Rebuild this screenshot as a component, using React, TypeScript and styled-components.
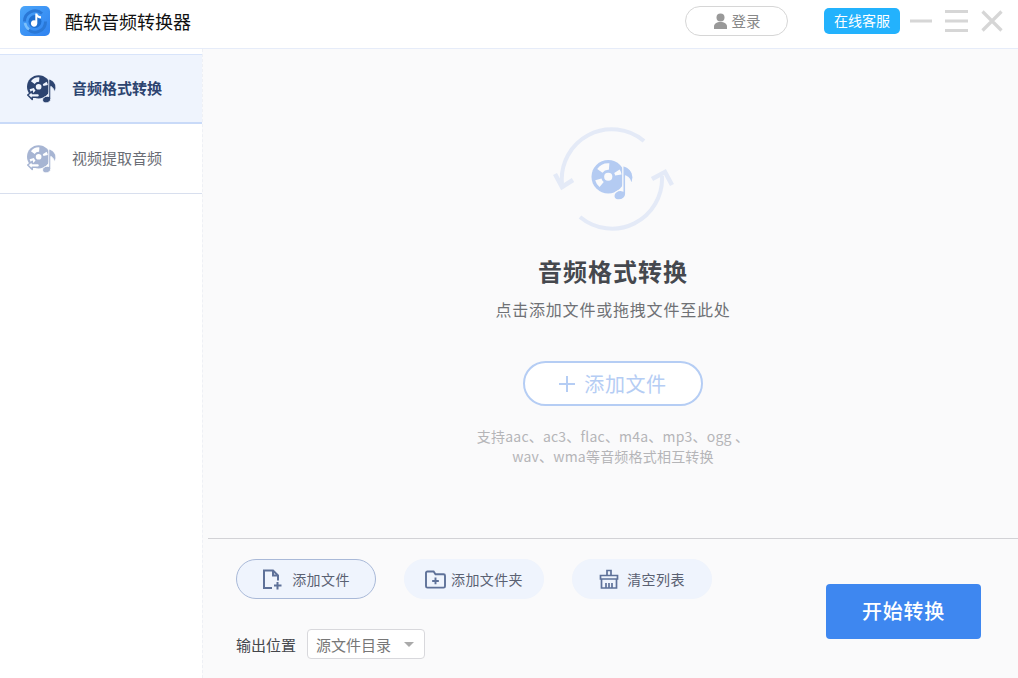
import React from "react";
import styled, { createGlobalStyle } from "styled-components";

const GlobalStyle = createGlobalStyle`
  html, body {
    margin: 0;
    padding: 0;
    background: #fff;
  }
  body {
    font-family: "Noto Sans CJK SC", "Liberation Sans", sans-serif;
  }
  * {
    box-sizing: border-box;
  }
`;

const Window = styled.div`
  width: 1018px;
  height: 678px;
  display: flex;
  flex-direction: column;
  overflow: hidden;
`;

const TitleBar = styled.div`
  height: 49px;
  flex: none;
  display: flex;
  align-items: center;
  padding: 0 15px 6px 20px;
  border-bottom: 1px solid #e6ecf9;
`;

const AppName = styled.div`
  margin-left: 15px;
  font-size: 18px;
  color: #111;
  flex: 1;
`;

const LoginButton = styled.div`
  width: 103px;
  height: 30px;
  border: 1px solid #d6d6d6;
  border-radius: 15px;
  display: flex;
  align-items: center;
  justify-content: center;
  gap: 4px;
  font-size: 14.5px;
  line-height: 26px;
  color: #888;
  margin-right: 36px;
`;

const ServiceButton = styled.div`
  width: 76px;
  height: 26px;
  border-radius: 5px;
  background: #23b2fd;
  color: #fff;
  font-size: 14px;
  line-height: 24px;
  padding-bottom: 2px;
  display: flex;
  align-items: center;
  justify-content: center;
  margin-right: 10px;
`;

const WindowIcons = styled.div`
  display: flex;
  align-items: center;
  gap: 13px;
`;

const Body = styled.div`
  flex: 1;
  display: flex;
  min-height: 0;
`;

const Sidebar = styled.div`
  width: 202px;
  flex: none;
  padding-top: 5px;
`;

const NavItem = styled.div<{ $active?: boolean }>`
  height: 70px;
  display: flex;
  align-items: center;
  padding-left: 27px;
  gap: 15px;
  font-size: 15px;
  font-weight: ${({ $active }) => ($active ? 700 : 400)};
  color: ${({ $active }) => ($active ? "#2d4470" : "#6a6d75")};
  background: ${({ $active }) => ($active ? "#eff4fd" : "#fff")};
  border-bottom: ${({ $active }) => ($active ? "2px solid #c9daf8" : "1px solid #d8dfee")};
  border-top: ${({ $active }) => ($active ? "1px solid #d8e4fa" : "none")};
`;

const NavLabel = styled.span`
  margin-top: -3px;
`;

const Main = styled.div`
  flex: 1;
  display: flex;
  flex-direction: column;
  background: #fafafb;
  padding-left: 5px;
  border-left: 1px dashed #eef0f5;
`;

const DropArea = styled.div`
  height: 490px;
  flex: none;
  display: flex;
  flex-direction: column;
  align-items: center;
  padding-top: 78px;
  border-bottom: 1px solid #d2d2d6;
`;

const DropTitle = styled.div`
  margin-top: 24px;
  font-size: 24px;
  line-height: 32px;
  letter-spacing: 1px;
  font-weight: 700;
  color: #45484e;
`;

const DropHint = styled.div`
  margin-top: 10px;
  font-size: 16px;
  line-height: 24px;
  letter-spacing: 0.8px;
  color: #6f7175;
`;

const AddButton = styled.div`
  margin-top: 40px;
  width: 180px;
  height: 45px;
  border: 2px solid #b5cdf4;
  border-radius: 23px;
  background: #fff;
  color: #b5cdf4;
  font-size: 20px;
  letter-spacing: 0.6px;
  display: flex;
  align-items: center;
  justify-content: center;
  gap: 9px;
`;

const Formats = styled.div`
  margin-top: 20px;
  font-size: 14px;
  line-height: 20px;
  letter-spacing: 0.2px;
  color: #b5b5b8;
  text-align: center;
`;

const Footer = styled.div`
  flex: 1;
  display: flex;
  justify-content: space-between;
  padding: 20px 37px 0 28px;
`;

const FooterLeft = styled.div`
  display: flex;
  flex-direction: column;
  gap: 30px;
`;

const ToolRow = styled.div`
  display: flex;
  gap: 28px;
`;

const ToolButton = styled.div<{ $outlined?: boolean; $gap: number }>`
  width: 140px;
  height: 40px;
  border-radius: 20px;
  background: #eff4fd;
  border: 1px solid ${({ $outlined }) => ($outlined ? "#a9b9d8" : "#eff4fd")};
  display: flex;
  align-items: center;
  justify-content: center;
  gap: ${({ $gap }) => $gap}px;
  font-size: 14px;
  letter-spacing: 0.4px;
  color: #5a6172;
`;

const OutputRow = styled.div`
  display: flex;
  align-items: center;
  gap: 11px;
  font-size: 15px;
  color: #44464b;
`;

const OutputSelect = styled.div`
  width: 118px;
  height: 30px;
  background: #fff;
  border: 1px solid #d8d8dc;
  border-radius: 4px;
  padding: 0 10px 0 8px;
  display: flex;
  align-items: center;
  justify-content: space-between;
  color: #777;
`;

const Caret = styled.span`
  width: 0;
  height: 0;
  border-left: 5px solid transparent;
  border-right: 5px solid transparent;
  border-top: 5px solid #aaa;
`;

const StartButton = styled.div`
  margin-top: 25px;
  width: 155px;
  height: 55px;
  padding-bottom: 2px;
  border-radius: 4px;
  background: #3e87f0;
  color: #fff;
  font-size: 20px;
  font-weight: 500;
  letter-spacing: 0.8px;
  display: flex;
  align-items: center;
  justify-content: center;
`;

// ring segment of the disc, angles in degrees clockwise from 3 o'clock
function sector(cx: number, cy: number, r0: number, r1: number, a0: number, a1: number) {
  const pt = (r: number, a: number) => {
    const t = (a * Math.PI) / 180;
    return `${(cx + r * Math.cos(t)).toFixed(2)} ${(cy + r * Math.sin(t)).toFixed(2)}`;
  };
  return `M${pt(r0, a0)}L${pt(r1, a0)}A${r1} ${r1} 0 0 1 ${pt(r1, a1)}L${pt(r0, a1)}A${r0} ${r0} 0 0 0 ${pt(r0, a0)}Z`;
}

function AppLogo() {
  return (
    <svg width="30" height="30" viewBox="0 0 30 30">
      <defs>
        <linearGradient id="logoBg" x1="0" y1="0" x2="1" y2="1">
          <stop offset="0" stopColor="#4ba6fa" />
          <stop offset="1" stopColor="#2f82f0" />
        </linearGradient>
      </defs>
      <rect width="30" height="30" rx="5" fill="url(#logoBg)" />
      <path d="M4.500 15.500A10.500 10.500 0 0 1 22 7.500" fill="none" stroke="#2a78d6" strokeWidth="3" />
      <path d="M25.500 15.500A10.500 10.500 0 0 1 8 23.500" fill="none" stroke="#2a78d6" strokeWidth="3" />
      <path d="M5 17a10 10 0 0 0 4 6.500" fill="none" stroke="#7cc0fb" strokeWidth="2.500" />
      <circle cx="15" cy="15.500" r="6.500" fill="#1f6fd0" />
      <path d="M15.300 7.500h2c.3 1.800 1.700 2.700 3.700 2.800v2.200c-1.500 0-2.700-.4-3.700-1.200V17.500a3.200 3.200 0 1 1-2-3z" fill="#fff" />
    </svg>
  );
}

// disc with its note; bg is the colour behind it, for the cut-outs
function DiscNote({ color, bg }: { color: string; bg: string }) {
  return (
    <>
      <circle cx="15.500" cy="15.500" r="15.500" fill={color} />
      <path d={sector(15.500, 15.500, 6.500, 12.500, 215, 275)} fill={bg} />
      <path d={sector(15.500, 15.500, 6.500, 12.500, 130, 165)} fill={bg} />
      <path d={sector(15.500, 15.500, 6.500, 12.500, 328, 350)} fill={bg} />
      <circle cx="15.500" cy="15.500" r="3.800" fill={bg} />
      <path
        d="M29 5c5.400 1.600 9.500 5.600 9.500 11 0 2.600-.8 4.600-2.200 6.400.2-3.400-2.200-6.200-4.600-7.400v16.400c0 3.200-3 5.600-6.400 5.600-2.800 0-4.600-1.600-4.600-3.700 0-3 3-5.100 6.200-5.100.7 0 1.400.1 2.100.4z"
        fill={color}
        stroke={bg}
        strokeWidth="1.200"
      />
    </>
  );
}

function NavIcon({ color, bg }: { color: string; bg: string }) {
  return (
    <svg width="30" height="28" viewBox="0 0 40 37">
      <DiscNote color={color} bg={bg} />
      <path
        d="M1 26.500l6-5v3h8.500l1.500 2.500-1.500 2.500H7v3z"
        fill={bg}
        stroke={color}
        strokeWidth="2"
        strokeLinejoin="round"
      />
    </svg>
  );
}

function ConvertGraphic() {
  return (
    <svg width="122" height="104" viewBox="0 0 122 104" fill="none">
      <path d="M92 14A50 50 0 0 0 10 57" stroke="#e4eaf7" strokeWidth="4" />
      <path d="M3 47L10 60L21 53" stroke="#e4eaf7" strokeWidth="4.500" />
      <path d="M28 90A50 50 0 0 0 110 49" stroke="#e4eaf7" strokeWidth="4" />
      <path d="M100 52L113 45L120 58" stroke="#e4eaf7" strokeWidth="4.500" />
      <g transform="translate(39.500 33) scale(1.08)">
        <DiscNote color="#b4cbf2" bg="#fafafb" />
      </g>
    </svg>
  );
}

function App() {
  return (
    <Window>
      <GlobalStyle />
      <TitleBar>
        <AppLogo />
        <AppName>酷软音频转换器</AppName>
        <LoginButton>
          <svg width="15" height="16" viewBox="0 0 15 16">
            <circle cx="7.500" cy="4.500" r="4" fill="#999" />
            <path d="M1 16v-2.500C1 10.800 3.500 9 7.500 9s6.500 1.800 6.500 4.500V16z" fill="#999" />
          </svg>
          登录
        </LoginButton>
        <ServiceButton>在线客服</ServiceButton>
        <WindowIcons>
          <svg width="22" height="4" viewBox="0 0 22 4">
            <rect width="22" height="3" y="0.500" fill="#d6d6d6" />
          </svg>
          <svg width="23" height="22" viewBox="0 0 23 22">
            <rect width="23" height="3" fill="#d6d6d6" />
            <rect width="23" height="3" y="9.500" fill="#d6d6d6" />
            <rect width="23" height="3" y="19" fill="#d6d6d6" />
          </svg>
          <svg width="22" height="22" viewBox="0 0 22 22">
            <path d="M1.500 1.500l19 19M20.500 1.500l-19 19" stroke="#d6d6d6" strokeWidth="3.200" />
          </svg>
        </WindowIcons>
      </TitleBar>
      <Body>
        <Sidebar>
          <NavItem $active>
            <NavIcon color="#2d4470" bg="#eff4fd" />
            <NavLabel>音频格式转换</NavLabel>
          </NavItem>
          <NavItem>
            <NavIcon color="#a7b5d3" bg="#fff" />
            <NavLabel>视频提取音频</NavLabel>
          </NavItem>
        </Sidebar>
        <Main>
          <DropArea>
            <ConvertGraphic />
            <DropTitle>音频格式转换</DropTitle>
            <DropHint>点击添加文件或拖拽文件至此处</DropHint>
            <AddButton>
              <svg width="16" height="16" viewBox="0 0 16 16">
                <path d="M8 0v16M0 8h16" stroke="#b5cdf4" strokeWidth="2" />
              </svg>
              添加文件
            </AddButton>
            <Formats>
              支持aac、ac3、flac、m4a、mp3、ogg 、
              <br />
              wav、wma等音频格式相互转换
            </Formats>
          </DropArea>
          <Footer>
            <FooterLeft>
              <ToolRow>
                <ToolButton $outlined $gap={10}>
                  <svg width="20" height="21" viewBox="0 0 20 21" fill="none" stroke="#5e7199" strokeWidth="2">
                    <path d="M10 19H2V1.500h9l5 5v5" />
                    <path d="M11 1.500v5h5" />
                    <path d="M15.500 13v7.500M12 16.500h7.500" />
                  </svg>
                  添加文件
                </ToolButton>
                <ToolButton $gap={5}>
                  <svg width="21" height="19" viewBox="0 0 22 20" fill="none" stroke="#5e7199" strokeWidth="2">
                    <path d="M1 3a1.500 1.500 0 0 1 1.500-1.500H9l2 3h8.500A1.500 1.500 0 0 1 21 6v11a1.500 1.500 0 0 1-1.500 1.500h-17A1.500 1.500 0 0 1 1 17z" />
                    <path d="M11 8v7M7.500 11.500h7" />
                  </svg>
                  添加文件夹
                </ToolButton>
                <ToolButton $gap={8}>
                  <svg width="20" height="20" viewBox="0 0 20 20" fill="none" stroke="#5e7199" strokeWidth="1.700">
                    <path d="M8 6V1.500h4V6" />
                    <path d="M1.500 10V6.500h17V10z" />
                    <path d="M2.500 10v9h15v-9" />
                    <path d="M7 14v5M10 14v5M13 14v5" />
                  </svg>
                  清空列表
                </ToolButton>
              </ToolRow>
              <OutputRow>
                输出位置
                <OutputSelect>
                  源文件目录
                  <Caret />
                </OutputSelect>
              </OutputRow>
            </FooterLeft>
            <StartButton>开始转换</StartButton>
          </Footer>
        </Main>
      </Body>
    </Window>
  );
}

export default App;
